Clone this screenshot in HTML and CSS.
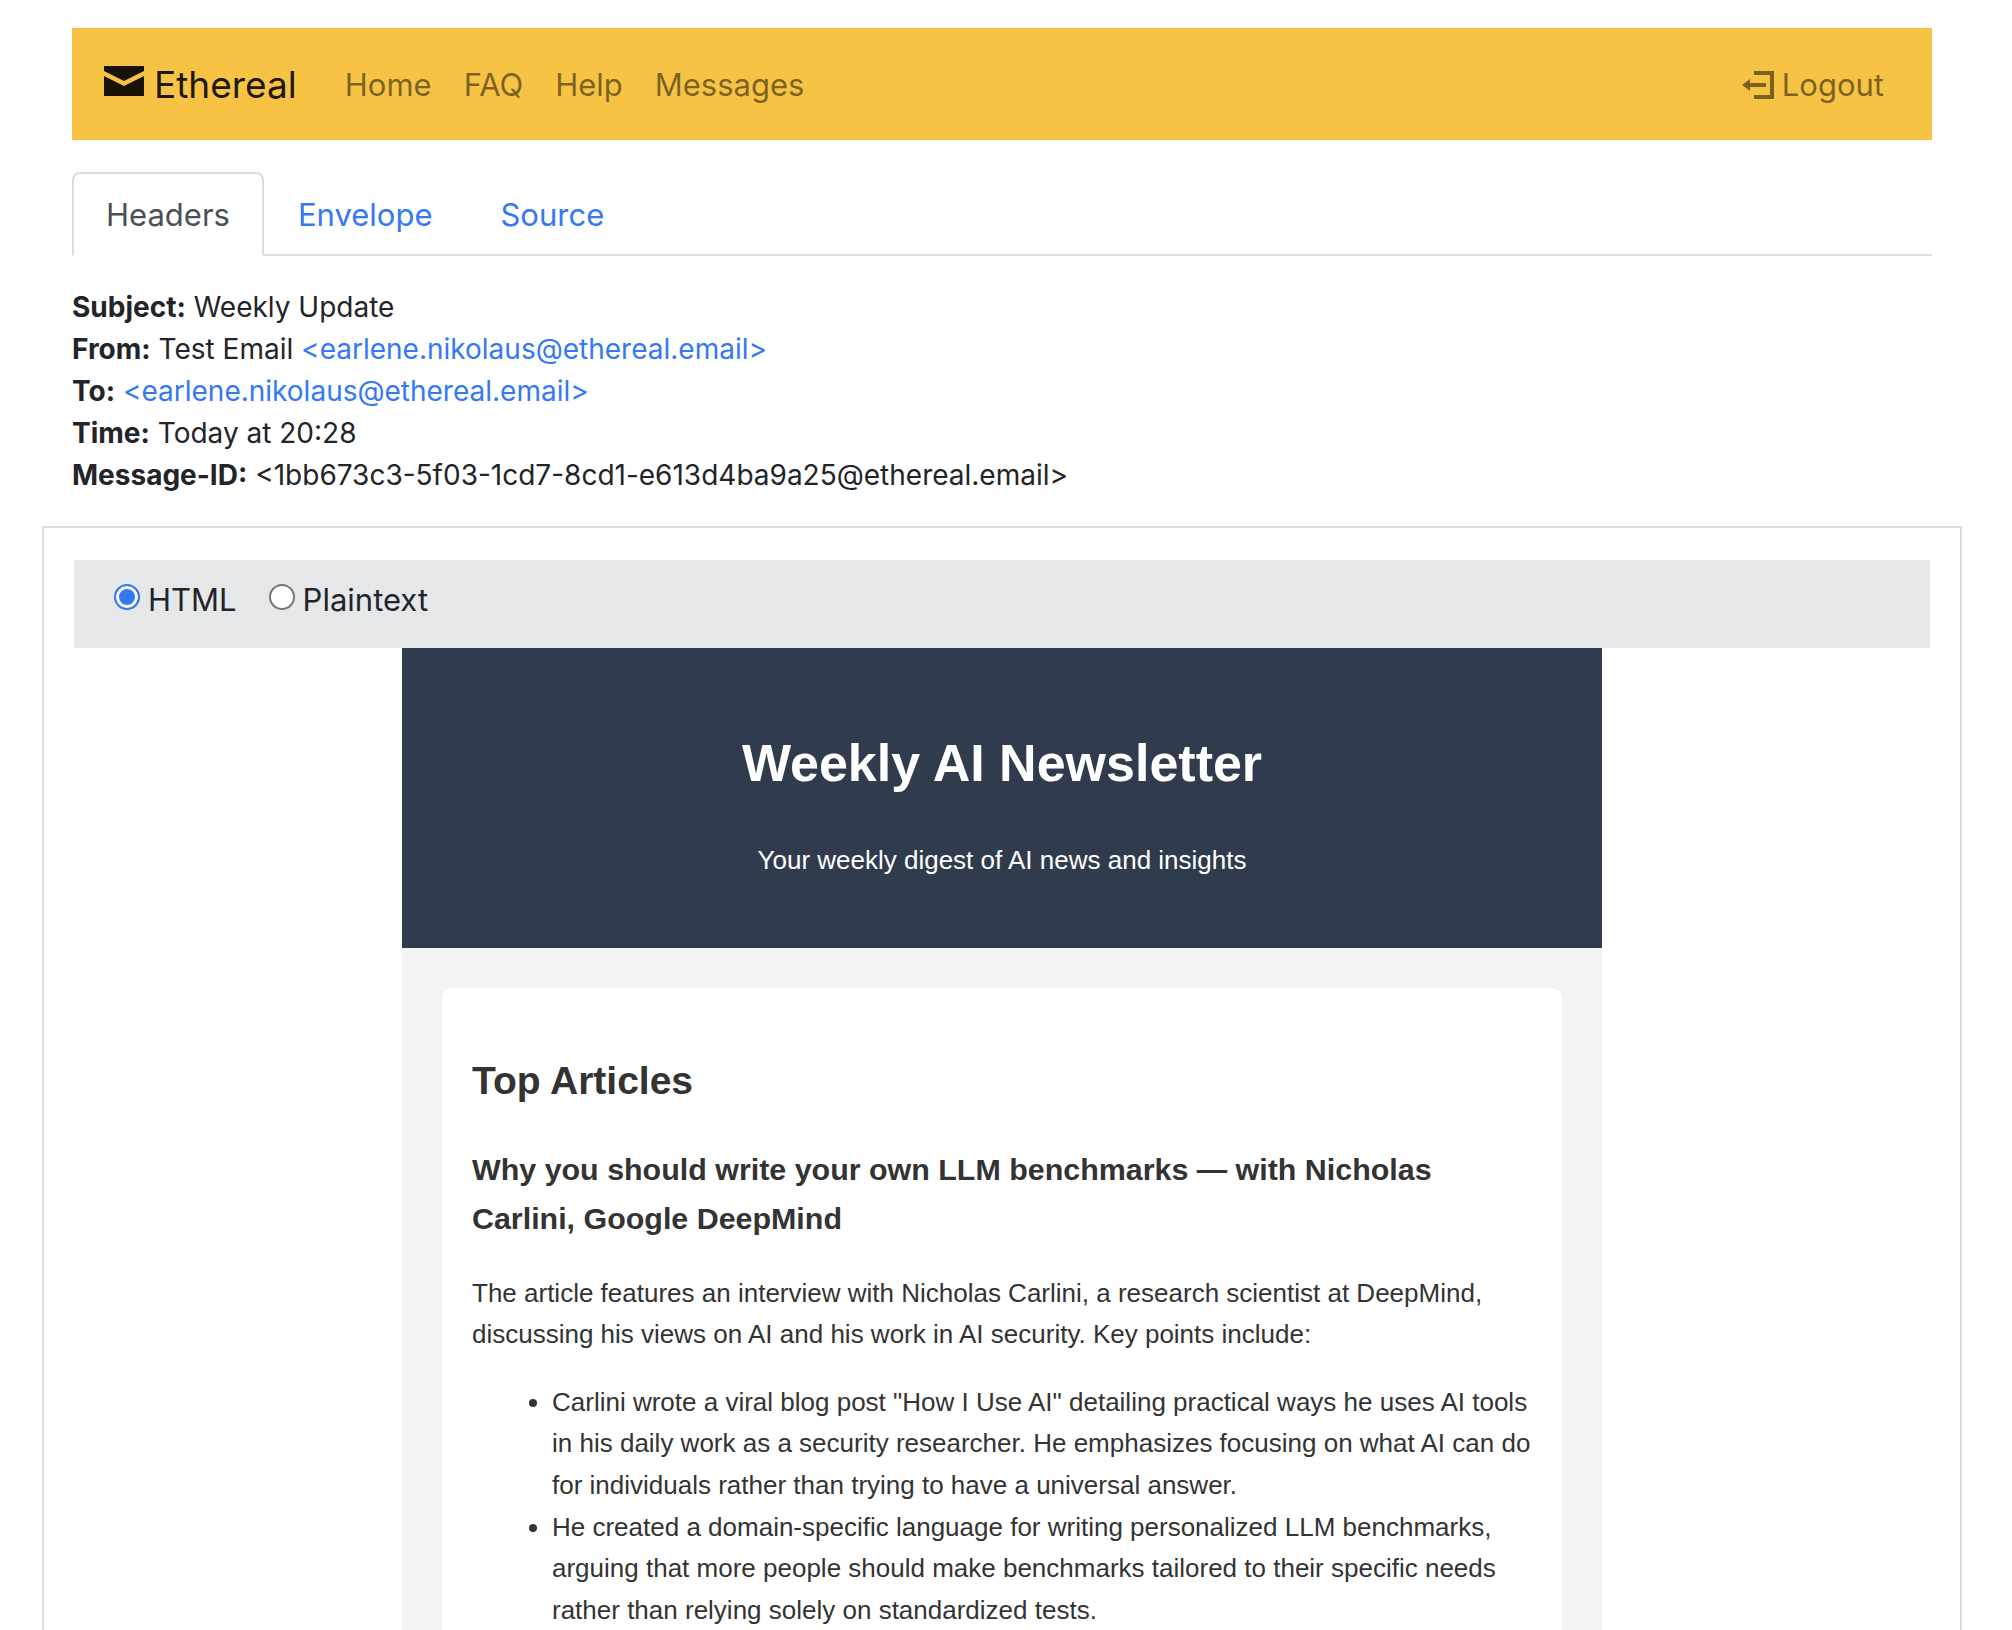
FILE: index.html
```html
<!DOCTYPE html>
<html lang="en">
<head>
<meta charset="utf-8">
<title>Ethereal</title>
<link rel="stylesheet" href="styles.css">
</head>
<body>
<header class="navbar">
  <a class="brand" href="#">
    <svg class="brand-icon" viewBox="0 0 8 6" aria-hidden="true"><path d="M0 0v1l4 2 4-2v-1h-8zm0 2v4h8v-4l-4 2-4-2z"/></svg>
    <span>Ethereal</span>
  </a>
  <nav class="nav-links">
    <a class="nav-link" href="#">Home</a>
    <a class="nav-link" href="#">FAQ</a>
    <a class="nav-link" href="#">Help</a>
    <a class="nav-link" href="#">Messages</a>
  </nav>
  <a class="nav-link logout" href="#">
    <svg class="logout-icon" viewBox="0 0 8 7" aria-hidden="true"><path d="M3 0v1h4v5h-4v1h5v-7h-5zm-1 2l-2 1.500 2 1.500v-1h4v-1h-4v-1z"/></svg>
    <span>Logout</span>
  </a>
</header>

<main>
  <nav class="tabs">
    <a class="tab tab-active" href="#headers">Headers</a>
    <a class="tab" href="#envelope">Envelope</a>
    <a class="tab" href="#source">Source</a>
  </nav>

  <section class="meta" id="headers">
    <div><strong>Subject:</strong> Weekly Update</div>
    <div><strong>From:</strong> Test Email <a href="#">&lt;earlene.nikolaus@ethereal.email&gt;</a></div>
    <div><strong>To:</strong> <a href="#">&lt;earlene.nikolaus@ethereal.email&gt;</a></div>
    <div><strong>Time:</strong> Today at 20:28</div>
    <div><strong>Message-ID:</strong> &lt;1bb673c3-5f03-1cd7-8cd1-e613d4ba9a25@ethereal.email&gt;</div>
  </section>

  <section class="message">
    <form class="format-bar">
      <label class="format"><input type="radio" name="format" checked>HTML</label>
      <label class="format"><input type="radio" name="format">Plaintext</label>
    </form>
    <article class="email">
      <div class="email-header">
        <h1>Weekly AI Newsletter</h1>
        <p>Your weekly digest of AI news and insights</p>
      </div>
      <div class="email-card">
        <h2>Top Articles</h2>
        <h3>Why you should write your own LLM benchmarks — with Nicholas Carlini, Google DeepMind</h3>
        <p>The article features an interview with Nicholas Carlini, a research scientist at DeepMind, discussing his views on AI and his work in AI security. Key points include:</p>
        <ul>
          <li>Carlini wrote a viral blog post "How I Use AI" detailing practical ways he uses AI tools in his daily work as a security researcher. He emphasizes focusing on what AI can do for individuals rather than trying to have a universal answer.</li>
          <li>He created a domain-specific language for writing personalized LLM benchmarks, arguing that more people should make benchmarks tailored to their specific needs rather than relying solely on standardized tests.</li>
        </ul>
      </div>
    </article>
  </section>
</main>
</body>
</html>
```
FILE: styles.css
```css
* {
  box-sizing: border-box;
}

body {
  margin: 0;
  padding: 28px 80px 0 72px;
  background: #fff;
  color: #212529;
  font-family: Inter, "Liberation Sans", sans-serif;
  font-size: 28px;
  line-height: 42px;
}

a {
  color: #3478f6;
  text-decoration: none;
}

.navbar {
  display: flex;
  align-items: center;
  padding: 17px 32px 15px;
  min-height: 112px;
  background: #f6c344;
}

.brand {
  display: flex;
  align-items: center;
  gap: 10px;
  margin-right: 32px;
  color: rgba(0, 0, 0, 0.9);
  font-size: 37px;
  line-height: 60px;
}

.brand-icon {
  width: 40px;
  height: 30px;
  margin-bottom: 8px;
  fill: currentColor;
}

.nav-links {
  display: flex;
  flex: 1;
}

.nav-link {
  padding: 16px;
  color: rgba(0, 0, 0, 0.5);
  font-size: 31px;
  line-height: 48px;
}

.logout {
  display: flex;
  align-items: center;
  gap: 8px;
}

.logout-icon {
  width: 32px;
  height: 28px;
  fill: currentColor;
}

.tabs {
  display: flex;
  margin-top: 32px;
  border-bottom: 2px solid #dcdcdc;
  font-size: 31px;
  line-height: 48px;
}

.tab {
  margin-bottom: -2px;
  padding: 17px 32px 15px;
  border: 2px solid transparent;
  border-radius: 8px 8px 0 0;
}

.tab-active {
  border-color: #dcdcdc #dcdcdc #fff;
  background: #fff;
  color: #495057;
}

.meta {
  margin: 30px 0;
}

.message {
  margin: 0 -30px;
  padding: 32px 30px;
  border: 2px solid #dadae5;
}

.format-bar {
  display: flex;
  gap: 32px;
  padding: 16px 40px 24px;
  background: #e6e7e9;
  font-size: 31px;
  line-height: 48px;
}

.format {
  display: flex;
  gap: 8px;
}

.format input {
  appearance: none;
  width: 26px;
  height: 26px;
  margin: 8px 0 0;
  border: 2px solid #767676;
  border-radius: 50%;
  background: #fff;
}

.format input:checked {
  border-color: #3478f6;
  background: #3478f6;
  box-shadow: inset 0 0 0 3px #fff;
}

.email {
  max-width: 1200px;
  margin: 0 auto;
  padding-bottom: 40px;
  background: #f3f3f3;
  color: #333;
  font-family: Arial, "Liberation Sans", sans-serif;
  font-size: 26px;
  line-height: 1.6;
}

.email-header {
  padding: 40px;
  background: #303c4e;
  color: #fff;
  text-align: center;
}

.email h1 {
  margin: 34px 0 35px;
  font-size: 52px;
}

.email-card {
  margin: 40px 40px 0;
  padding: 30px;
  border-radius: 10px;
  background: #fff;
}

.email-card ul {
  padding-left: 80px;
}
```
